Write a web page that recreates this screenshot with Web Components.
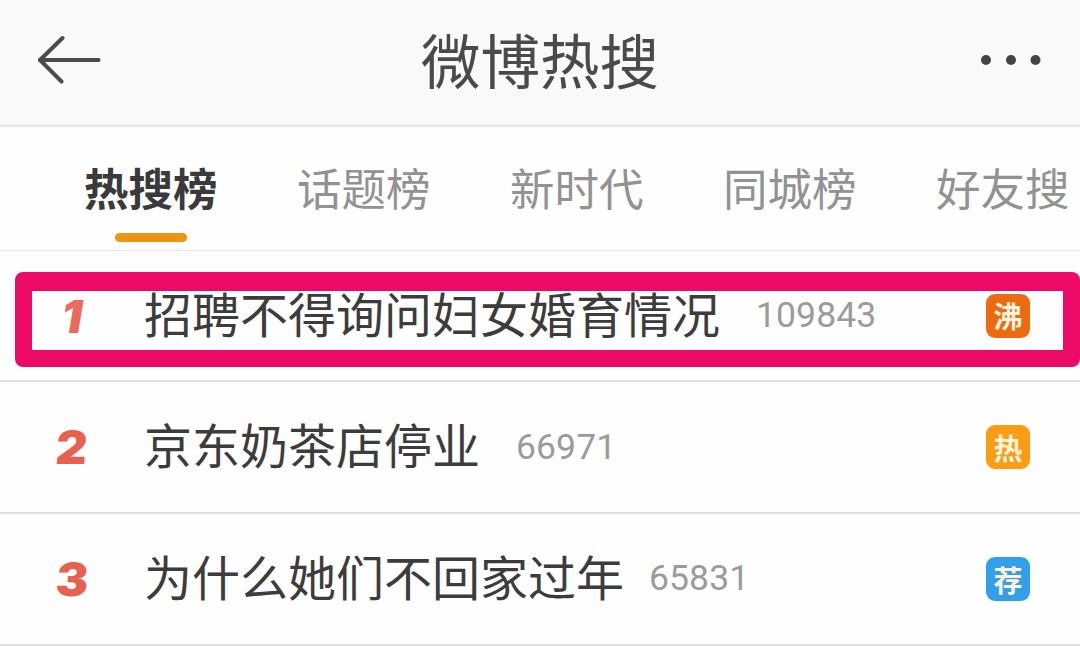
<!DOCTYPE html>
<html lang="zh-CN"><head><meta charset="utf-8"><title>微博热搜</title>
<style>
html,body{margin:0;padding:0;background:#fefefe;overflow:hidden}
body{width:1080px;height:646px;font-family:"Noto Sans CJK SC","Noto Sans",sans-serif}
</style></head><body>
<hot-app>
  <app-header>微博热搜</app-header>
  <tab-bar>
    <tab-item active>热搜榜</tab-item>
    <tab-item>话题榜</tab-item>
    <tab-item>新时代</tab-item>
    <tab-item>同城榜</tab-item>
    <tab-item>好友搜</tab-item>
  </tab-bar>
  <hot-row rank="1" count="109843" badge="沸" color="#ec6a12" marked>招聘不得询问妇女婚育情况</hot-row>
  <hot-row rank="2" count="66971" badge="热" color="#f89d14">京东奶茶店停业</hot-row>
  <hot-row rank="3" count="65831" badge="荐" color="#319fe9" style="--gap:25px">为什么她们不回家过年</hot-row>
</hot-app>
<script>
function def(name, html, extra){
  customElements.define(name, class extends HTMLElement{
    constructor(){super();this.attachShadow({mode:'open'}).innerHTML=html;}
    connectedCallback(){ if(extra) extra(this,this.shadowRoot); }
  });
}
def('hot-app',`<style>:host{display:flex;flex-direction:column;width:1080px;height:646px;overflow:hidden;filter:blur(.4px)}</style><slot></slot>`);
def('app-header',`<style>
:host{display:flex;align-items:center;justify-content:space-between;box-sizing:border-box;height:126px;background:#f9f9f9;border-bottom:1px solid #dedede;box-shadow:0 1px 1px #eee;padding:0 38px 4px 38px;position:relative}
svg{display:block}
.t{position:absolute;left:0;right:0;top:23px;text-align:center;font-size:59.5px;line-height:70px;color:#4a4a4a}
</style>
<svg width="64" height="50" viewBox="0 0 64 50" fill="none" stroke="#4b4b4b" stroke-width="4" stroke-linecap="round" stroke-linejoin="round"><path d="M24.500 3 L2 25 L23.500 46.500"/><path d="M2 25 H60.500"/></svg>
<div class="t"><slot></slot></div>
<svg width="62" height="12" viewBox="0 0 62 12" fill="#444"><circle cx="6" cy="6" r="5"/><circle cx="31" cy="6" r="5"/><circle cx="55.500" cy="6" r="5"/></svg>`);
def('tab-bar',`<style>
:host{display:flex;gap:79.500px;box-sizing:border-box;height:125px;padding-left:84px;border-bottom:1px solid #e4e4e4;background:#fefefe;white-space:nowrap}
</style><slot></slot>`);
def('tab-item',`<style>
:host{display:flex;flex-direction:column;align-items:center;flex:none;width:133.500px;font-size:44.500px;line-height:52px;padding-top:35px;color:#929292}
:host([active]){color:#3a3a3a;font-weight:700}
i{display:none;width:72px;height:9px;border-radius:5px;background:#ec9512;margin-top:20px}
:host([active]) i{display:block}
</style><slot></slot><i></i>`);
def('hot-row',`<style>
:host{display:flex;align-items:center;position:relative;box-sizing:border-box;height:132px;border-bottom:2px solid #dfdfdf;white-space:nowrap;background:#fefefe}
.r{flex:none;width:144px;text-align:center;font:900 46px/1 Inter,"Liberation Sans",sans-serif;color:#e8604f}
.r b{display:inline-block;font-weight:900;transform:skewX(-5deg) scaleX(1.06)}
:host([marked]) .r b{font-style:italic;transform:none;color:#ea6a5c}
.n{font-size:48px;line-height:64px;color:#3c3c3c;padding-bottom:8px}
.c{font:35.500px/1 Roboto,sans-serif;color:#9b9b9b;margin-left:var(--gap,36px);letter-spacing:.1px}
.b{margin-left:auto;margin-right:50px;width:44px;height:44px;border-radius:9px;display:flex;align-items:center;justify-content:center;font-size:29px;line-height:1;font-weight:700;color:#fff3dc;flex:none}
.m{display:none;position:absolute;left:15px;right:0;top:21px;height:95px;box-sizing:border-box;border:17.500px solid #ec0a66;border-top-width:19px;border-bottom-width:17px;border-radius:8px}
:host([marked]) .m{display:block}
</style><span class="r"><b></b></span><span class="n"><slot></slot></span><span class="c"></span><span class="b"></span><div class="m"></div>`,
(el,s)=>{
  s.querySelector('.r b').textContent=el.getAttribute('rank');
  s.querySelector('.c').textContent=el.getAttribute('count');
  const b=s.querySelector('.b');b.textContent=el.getAttribute('badge');b.style.background=el.getAttribute('color');
});
</script>
</body></html>
